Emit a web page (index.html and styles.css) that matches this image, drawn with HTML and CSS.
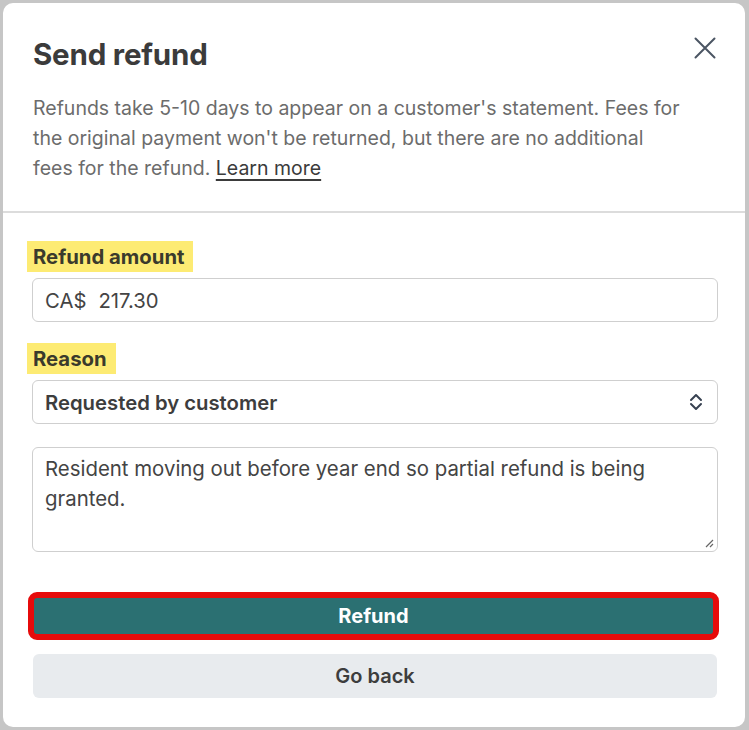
FILE: index.html
```html
<!DOCTYPE html>
<html>
<head>
<meta charset="utf-8">
<link rel="stylesheet" href="styles.css">
</head>
<body>
<div class="modal">
  <div class="header">
    <div class="title-row">
      <h1 class="title">Send refund</h1>
      <button class="close" aria-label="Close">
        <svg width="22" height="22" viewBox="0 0 22 22"><path d="M1.5 1.5L20.5 20.5M20.5 1.5L1.5 20.5" stroke="#4b5563" stroke-width="2" stroke-linecap="round" fill="none"/></svg>
      </button>
    </div>
    <p class="desc">Refunds take 5-10 days to appear on a customer's statement. Fees for the original payment won't be returned, but there are no additional fees for the refund. <a class="link" href="#">Learn more</a></p>
  </div>
  <div class="body">
    <div class="field">
      <span class="label">Refund amount</span>
      <div class="input"><span class="cur">CA$</span><span>217.30</span></div>
    </div>
    <div class="field">
      <span class="label">Reason</span>
      <div class="input select"><span>Requested by customer</span>
        <svg class="chev" width="14" height="18" viewBox="0 0 14 18"><path d="M2 7L7 2L12 7M2 11L7 16L12 11" stroke="#374151" stroke-width="2" fill="none" stroke-linecap="round" stroke-linejoin="round"/></svg>
      </div>
    </div>
    <div class="textarea">Resident moving out before year end so partial refund is being granted.
      <svg class="grip" width="10" height="10" viewBox="0 0 10 10"><path d="M9 2L2 9M9 6L6 9" stroke="#666" stroke-width="1.2"/></svg>
    </div>
    <div class="actions">
      <div class="refund-wrap"><button class="btn primary">Refund</button></div>
      <button class="btn secondary">Go back</button>
    </div>
  </div>
</div>
</body>
</html>
```
FILE: styles.css
```css
* { box-sizing: border-box; }
html, body { margin: 0; padding: 0; }
body {
  background: #c6c6c6;
  font-family: "Inter", "Liberation Sans", sans-serif;
  width: 749px;
  height: 730px;
  overflow: hidden;
  padding: 3px 4px 3px 3px;
}
.modal {
  background: #fff;
  border-radius: 10px;
  height: 724px;
  display: flex;
  flex-direction: column;
}
.header {
  padding: 30px 30px 28px 30px;
  border-bottom: 2px solid #dcdcdc;
}
.title-row {
  display: flex;
  justify-content: space-between;
  align-items: flex-start;
}
.title {
  margin: 0;
  font-size: 29.5px;
  line-height: 42px;
  font-weight: 700;
  color: #3b3b3b;
  letter-spacing: -0.2px;
}
.close {
  background: none;
  border: 0;
  padding: 0;
  margin: 4px -1px 0 0;
  width: 22px;
  height: 22px;
}
.desc {
  margin: 18px 0 0 0;
  max-width: 650px;
  font-size: 19.5px;
  line-height: 30px;
  color: #6c6c6c;
}
.link {
  color: #3b3b3b;
  text-decoration: underline;
  text-underline-offset: 4px;
  text-decoration-thickness: 2px;
}
.body {
  padding: 28px 27px 0 29px;
  display: flex;
  flex-direction: column;
}
.field {
  display: flex;
  flex-direction: column;
  align-items: flex-start;
  margin-bottom: 21px;
}
.label {
  background: #fdeb73;
  font-weight: 700;
  font-size: 20.3px;
  line-height: 31px;
  color: #3a3a2c;
  padding: 0 9px 0 6px;
  margin-left: -5px;
}
.label + .input { margin-top: 6px; }
.input {
  width: 686px;
  height: 44px;
  border: 1px solid #cfcfcf;
  border-radius: 6px;
  display: flex;
  align-items: center;
  padding: 0 12px;
  font-size: 20.3px;
  color: #444;
  gap: 12px;
}
.select {
  font-weight: 600;
  color: #3d3d3d;
  justify-content: space-between;
}
.chev { margin-right: 2px; }
.textarea {
  position: relative;
  width: 686px;
  height: 105px;
  margin: 2px 0 0 0;
  border: 1px solid #cfcfcf;
  border-radius: 6px;
  padding: 6px 12px;
  font-size: 20.4px;
  line-height: 30px;
  color: #444;
}
.grip { position: absolute; right: 3px; bottom: 3px; }
.actions {
  margin-top: 40px;
  display: flex;
  flex-direction: column;
  gap: 14px;
}
.refund-wrap {
  border: 6px solid #e60b0b;
  border-radius: 9px;
  width: 691px;
  margin-left: -4px;
  background: #e60b0b;
}
.btn {
  display: block;
  font-family: inherit;
  border: 0;
  font-size: 20px;
  font-weight: 700;
  cursor: pointer;
}
.primary {
  width: 100%;
  height: 36px;
  background: #2b7072;
  color: #fff;
  border-radius: 3px;
}
.secondary {
  width: 684px;
  height: 44px;
  margin-left: 1px;
  background: #e8ebee;
  color: #3d3d3d;
  border-radius: 6px;
  font-weight: 600;
}
```
